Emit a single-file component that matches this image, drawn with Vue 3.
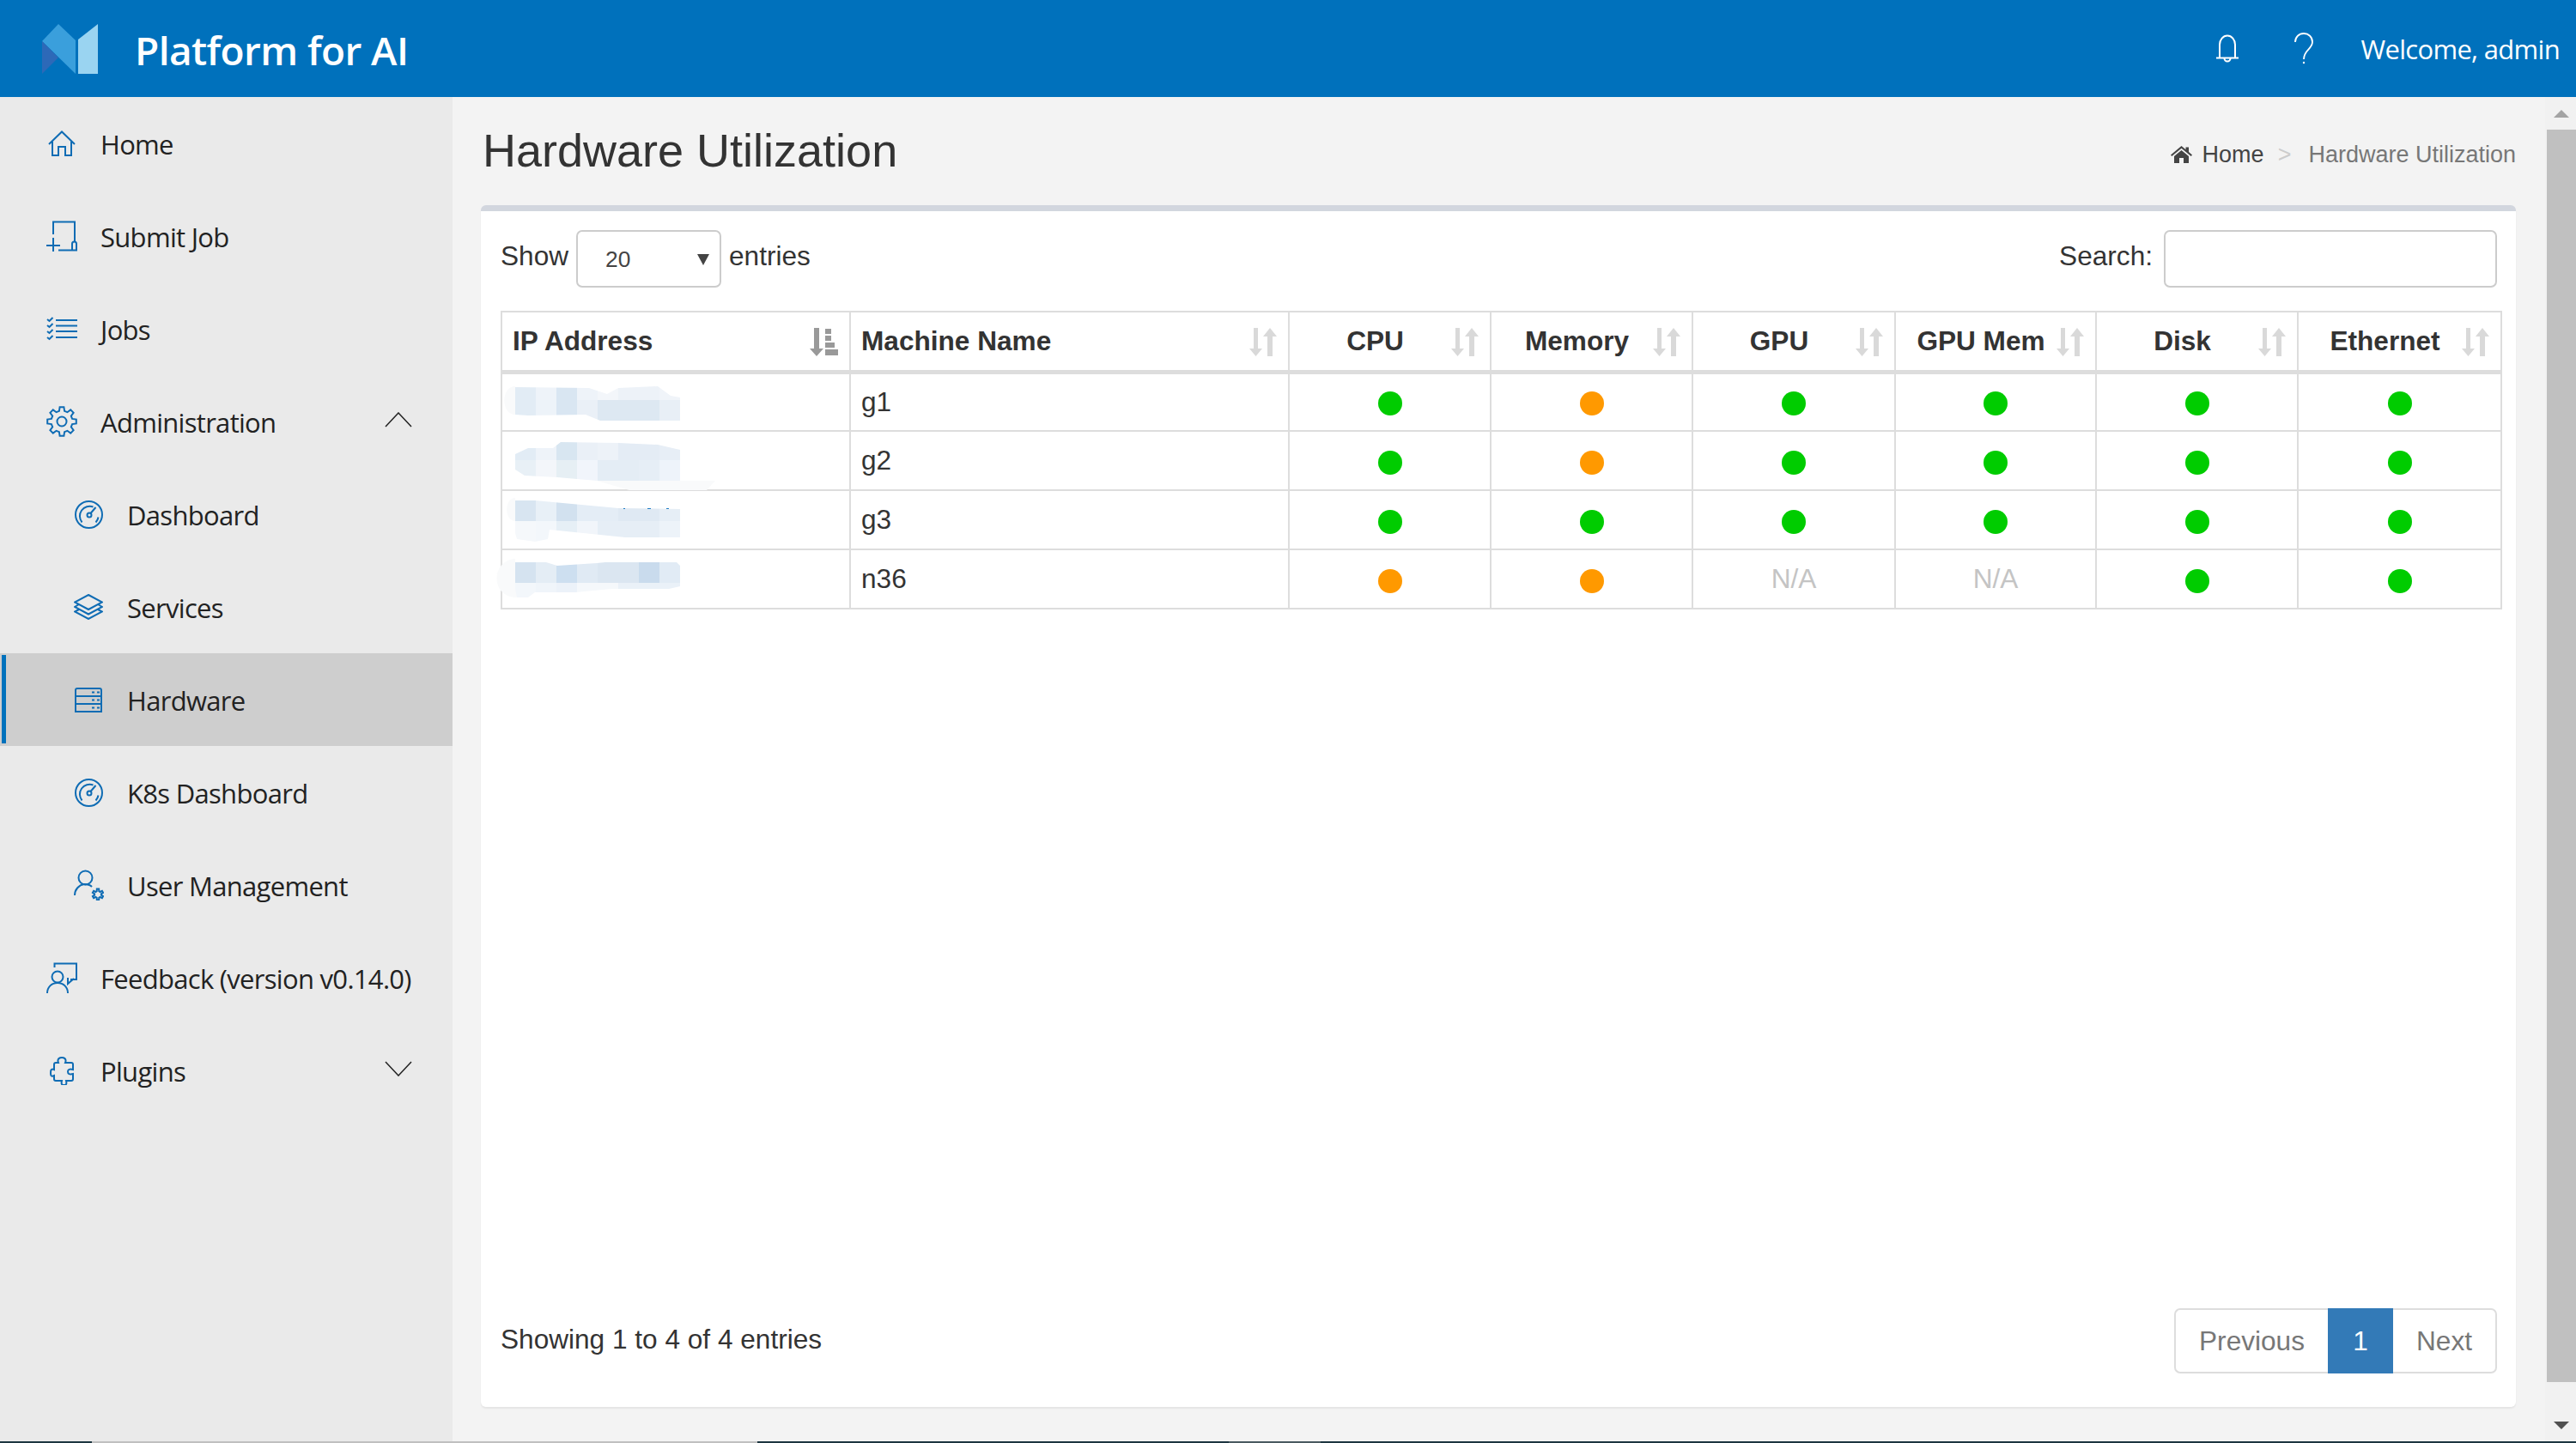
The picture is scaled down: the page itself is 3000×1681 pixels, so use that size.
<template>
  <div class="page">
    <header class="topbar">
      <svg class="logo" width="65" height="58" viewBox="0 0 65 58">
        <polygon points="0,20 19,0 39,19 39,58" fill="#3a9fdc" />
        <polygon points="0,20 19,39 0,58" fill="#2d69b8" />
        <polygon points="42,18 65,0 65,58 42,58" fill="#9ad4f1" />
      </svg>
      <span class="brand">Platform for AI</span>
      <div class="topbar-right">
        <svg class="bell" width="28" height="33" viewBox="0 0 28 33" fill="none" stroke="#fff" stroke-width="2">
          <path d="M5 27V12a9 10.500 0 0 1 18 0v15" />
          <path d="M1 27.500h26" />
          <path d="M10.500 28a3.500 3.500 0 0 0 7 0" />
        </svg>
        <svg class="help" width="22" height="37" viewBox="0 0 22 37" fill="none" stroke="#fff" stroke-width="1.800">
          <path d="M1 11C1 5 5.500 1 11 1s10 4 10 10c0 8-10 9-10 20" />
          <circle cx="11" cy="35" r="1.200" fill="#fff" stroke="none" />
        </svg>
        <span class="welcome">Welcome, admin</span>
      </div>
    </header>

    <div class="body">
      <nav class="sidebar">
        <a
          v-for="item in navItems"
          :key="item.label"
          :class="['nav-item', { 'nav-sub': item.sub, active: item.active }]"
        >
          <span class="nav-icon">
            <svg
              :width="item.w"
              :height="item.h"
              :viewBox="`0 0 ${item.w} ${item.h}`"
              fill="none"
              stroke="#0f6cb4"
              stroke-width="2"
            >
              <path v-for="d in item.paths" :key="d" :d="d" />
            </svg>
          </span>
          <span class="nav-label">{{ item.label }}</span>
          <svg
            v-if="item.chevron"
            class="chevron"
            width="32"
            height="18"
            viewBox="0 0 32 18"
            fill="none"
            stroke="#222"
            stroke-width="1.500"
          >
            <path :d="item.chevron === 'up' ? 'M1 17L16 1l15 16' : 'M1 1l15 16L31 1'" />
          </svg>
        </a>
      </nav>

      <main class="content">
        <div class="title-row">
          <h1>Hardware Utilization</h1>
          <div class="breadcrumb">
            <svg width="25" height="20" viewBox="0 0 25 20" fill="#444">
              <path d="M12.500 0L0 10.500l1.300 1.500L12.500 2.800 23.700 12l1.300-1.500-4-3.400V1.500h-3.500v2.700z" />
              <path d="M12.500 5L4 12v8h6v-6h5v6h6v-8z" />
            </svg>
            <span class="crumb-home">Home</span>
            <span class="crumb-sep">&gt;</span>
            <span class="crumb-current">Hardware Utilization</span>
          </div>
        </div>

        <section class="card">
          <div class="controls">
            <label class="length">
              Show
              <span class="select"><span>20</span><i class="caret"></i></span>
              entries
            </label>
            <label class="search">
              Search:
              <span class="search-input"></span>
            </label>
          </div>

          <table class="grid">
            <colgroup>
              <col v-for="(w, i) in colWidths" :key="i" :style="{ width: w + 'px' }" />
            </colgroup>
            <thead>
              <tr>
                <th v-for="(col, i) in columns" :key="col" :class="{ 'th-left': i < 2 }">
                  {{ col }}
                  <svg v-if="i === 0" class="sort" width="33" height="33" viewBox="0 0 33 33" fill="#999">
                    <path d="M5 0h6v24h5L8 33 0 24h5z" />
                    <path d="M18 1h7v6h-7zM18 9h7v6h-7zM18 17h11v6H18zM18 25h15v7H18z" />
                  </svg>
                  <svg v-else class="sort" width="32" height="33" viewBox="0 0 32 33" fill="#d9d9d9">
                    <path d="M5 0h5v24h5L7.500 33 0 24h5z" />
                    <path d="M21 33h6V10h5L24 0l-8 10h5z" />
                  </svg>
                </th>
              </tr>
            </thead>
            <tbody>
              <tr v-for="(row, r) in rows" :key="row.name">
                <td class="ip-cell">
                  <svg class="mosaic" width="300" height="67" viewBox="0 0 300 67">
                    <path v-for="s in row.smears" :key="s" :d="s" fill="#f9fafb" />
                    <clipPath :id="`ip-${r}`">
                      <path :d="row.shape" />
                    </clipPath>
                    <g :clip-path="`url(#ip-${r})`">
                      <rect
                        v-for="(c, i) in row.top"
                        :key="'t' + i"
                        :x="17 + 24 * i"
                        y="0"
                        width="24"
                        :height="row.split"
                        :fill="c"
                      />
                      <rect
                        v-for="(c, i) in row.bottom"
                        :key="'b' + i"
                        :x="17 + 24 * i"
                        :y="row.split"
                        width="24"
                        :height="67 - row.split"
                        :fill="c"
                      />
                    </g>
                    <path v-if="row.specks" :d="row.specks" fill="#1f7cc4" />
                  </svg>
                </td>
                <td>{{ row.name }}</td>
                <td v-for="(s, i) in row.status" :key="i" class="center">
                  <span v-if="s === 'na'" class="na">N/A</span>
                  <span v-else :class="['dot', s]"></span>
                </td>
              </tr>
            </tbody>
          </table>

          <div class="footer-row">
            <span class="info">Showing 1 to 4 of 4 entries</span>
            <div class="pager">
              <span class="page-btn prev">Previous</span>
              <span class="page-btn current">1</span>
              <span class="page-btn next">Next</span>
            </div>
          </div>
        </section>
      </main>

      <div class="scrollbar">
        <span class="arrow-up"></span>
        <span class="thumb"></span>
        <span class="arrow-down"></span>
      </div>
    </div>
    <div class="strip">
      <span class="seg seg-dark" style="width: 107px"></span>
      <span class="seg seg-light" style="width: 775px"></span>
      <span class="seg seg-dark" style="width: 549px"></span>
      <span class="seg seg-mid" style="width: 107px"></span>
      <span class="seg seg-dark seg-rest"></span>
    </div>
  </div>
</template>

<script setup>
function gear(cx, cy, outer, inner, teeth) {
  const step = (Math.PI * 2) / teeth
  let d = ''
  for (let i = 0; i < teeth; i++) {
    const a = i * step - Math.PI / 2
    const pts = [
      [inner, a - step * 0.32],
      [outer, a - step * 0.18],
      [outer, a + step * 0.18],
      [inner, a + step * 0.32]
    ]
    for (const [r, t] of pts) {
      d += `${d ? 'L' : 'M'}${(cx + r * Math.cos(t)).toFixed(1)} ${(cy + r * Math.sin(t)).toFixed(1)}`
    }
  }
  return d + 'Z'
}

const gauge = [
  'M32 16.500a15.500 15.500 0 1 1-31 0 15.500 15.500 0 0 1 31 0z',
  'M8.500 25.500a11.500 11.500 0 0 1 13-18',
  'M24.500 25.500a11.500 11.500 0 0 0 3-6',
  'M19.500 17a2.500 2.500 0 1 1-5 0 2.500 2.500 0 0 1 5 0z',
  'M18.500 15l6-7'
]

const navItems = [
  {
    label: 'Home',
    w: 32,
    h: 30,
    paths: ['M1 16L16 1.500 31 16', 'M5 13v16h7V19h8v10h7V13']
  },
  {
    label: 'Submit Job',
    w: 36,
    h: 36,
    paths: ['M8 16V1.500h25V24', 'M14 34.500h21V27a2.500 2.500 0 0 0-5 0v7', 'M0 29h16', 'M8 20v16']
  },
  {
    label: 'Jobs',
    w: 36,
    h: 28,
    paths: [
      'M11 4h25', 'M11 10.500h25', 'M11 17h25', 'M11 24h25',
      'M1 3l2.500 2L7.500 1', 'M1 10l2.500 2 4-4', 'M1 17l2.500 2 4-4', 'M1 24l2.500 2 4-4'
    ]
  },
  {
    label: 'Administration',
    chevron: 'up',
    w: 36,
    h: 36,
    paths: [gear(18, 18, 17, 12.5, 8), 'M23.500 18a5.500 5.500 0 1 1-11 0 5.500 5.500 0 0 1 11 0z']
  },
  { label: 'Dashboard', sub: true, w: 33, h: 33, paths: gauge },
  {
    label: 'Services',
    sub: true,
    w: 34,
    h: 30,
    paths: [
      'M17 1l16 8.500L17 18 1 9.500z',
      'M6 12l-5 3 16 8.500L33 15l-5-3',
      'M6 18l-5 2.500L17 29l16-8.500-5-2.500'
    ]
  },
  {
    label: 'Hardware',
    sub: true,
    active: true,
    w: 32,
    h: 29,
    paths: [
      'M1 3a2 2 0 0 1 2-2h26a2 2 0 0 1 2 2v25H1z',
      'M1 10h30', 'M1 19h30',
      'M20 5.500h3', 'M26 5.500h3', 'M20 14.500h3', 'M26 14.500h3', 'M20 23.500h3', 'M26 23.500h3'
    ]
  },
  { label: 'K8s Dashboard', sub: true, w: 33, h: 33, paths: gauge },
  {
    label: 'User Management',
    sub: true,
    w: 35,
    h: 36,
    paths: [
      'M21.500 9.500a8 8 0 1 1-16 0 8 8 0 0 1 16 0z',
      'M1 30c0-7 5-12 11-13 4 0 7 1 9 3',
      gear(28, 29, 6.5, 4, 6)
    ]
  },
  {
    label: 'Feedback (version v0.14.0)',
    w: 36,
    h: 36,
    paths: [
      'M9.500 6V1.500H35V20h-7',
      'M32 19l-7 6v-7',
      'M19.500 17a6.500 6.500 0 1 1-13 0 6.500 6.500 0 0 1 13 0z',
      'M1 36c0-7 5-12 12-12s12 5 12 12'
    ]
  },
  {
    label: 'Plugins',
    chevron: 'down',
    w: 28,
    h: 33,
    paths: [
      'M10 7c-2-5 2-6 4-6s6 1 4 6h7a2 2 0 0 1 2 2v6c-4-1-6 0-6 2.500S23 21 27 20v6a2 2 0 0 1-2 2h-6c1 4 0 5-2.500 5S13 32 14 28H7a2 2 0 0 1-2-2v-4c-4 2-4-1-4-3s0-6 4-4V9a2 2 0 0 1 2-2z'
    ]
  }
]

const columns = ['IP Address', 'Machine Name', 'CPU', 'Memory', 'GPU', 'GPU Mem', 'Disk', 'Ethernet']
const colWidths = [406, 511, 235, 235, 236, 234, 235, 237]

// the first column is a pixelated, smudged-out address
const rows = [
  {
    name: 'g1',
    status: ['ok', 'warn', 'ok', 'ok', 'ok', 'ok'],
    shape: 'M17 15L103 16 124 23 137 16 183 14 198 25 209 27V54H116L99 47 32 48 17 47Z',
    split: 30,
    top: ['#e2ecf5', '#eef3f9', '#d9e6f2', '#eef3f9', '#f3f6fa', '#edf2f8', '#edf2f8', '#f0f4f9'],
    bottom: ['#e2ecf5', '#edf3f9', '#d9e6f2', '#eaf0f7', '#dde8f2', '#dde8f2', '#dde8f2', '#e8eff6'],
    smears: ['M17 14C0 14 0 47 17 47Z']
  },
  {
    name: 'g2',
    status: ['ok', 'warn', 'ok', 'ok', 'ok', 'ok'],
    shape: 'M17 26L32 19 61 19 70 12 137 13 183 15 209 21V57H112L66 53 28 51 17 44Z',
    split: 33,
    top: ['#e2ecf5', '#eef3f9', '#d8e6f1', '#eaf0f7', '#edf2f8', '#e4ecf5', '#e4ecf5', '#e7eef6'],
    bottom: ['#e8f0f6', '#f3f6fa', '#e6eff4', '#f1f5fb', '#e4edf5', '#e4edf5', '#e6eef6', '#eef3fa'],
    smears: ['M112 57H250L240 68H150Z']
  },
  {
    name: 'g3',
    status: ['ok', 'ok', 'ok', 'ok', 'ok', 'ok'],
    shape: 'M17 11L40 11 137 20 209 21V54H145L57 45 55 56 40 59 19 56 17 49Z',
    split: 35,
    top: ['#d8e5f1', '#e8f0f7', '#d2e1ef', '#e4edf6', '#e4edf6', '#dfe9f3', '#dfe9f3', '#e6eef6'],
    bottom: ['#f5f8fb', '#f3f7fb', '#e6eff6', '#f1f5fa', '#e6eef6', '#e6eef6', '#e6eef6', '#edf3f9'],
    smears: ['M17 8C4 8 4 35 17 35Z'],
    specks: 'M143 20h2v1h-2zM171 20h4v1h-4zM193 20h3v1h-3z'
  },
  {
    name: 'n36',
    status: ['warn', 'warn', 'na', 'na', 'ok', 'ok'],
    shape: 'M17 14L53 14 66 18 112 15 122 14 205 14 209 18V42L196 45 129 45 87 49 40 49 32 55 19 55 17 45Z',
    split: 38,
    top: ['#d5e3f0', '#e4edf5', '#cddff0', '#e0eaf4', '#dbe6f1', '#dbe6f1', '#c9dbed', '#e1ebf5'],
    bottom: ['#f3f7fb', '#f0f5fa', '#ecf2f9', '#f5f8fb', '#f5f8fb', '#eaf1f8', '#eaf1f8', '#eaf1f8'],
    smears: ['M17 10C-12 12-12 55 19 55Z']
  }
]
</script>

<style>
html,
body {
  margin: 0;
  overflow: hidden;
}
</style>

<style scoped>
.page {
  width: 3000px;
  height: 1681px;
  display: flex;
  flex-direction: column;
  background: #f3f3f3;
  font-family: "Liberation Sans", Arial, sans-serif;
  font-size: 31.600px;
  color: #333;
  overflow: hidden;
}

.topbar {
  flex: 0 0 113px;
  display: flex;
  align-items: center;
  padding: 0 19px 0 49px;
  background: #0071bc;
  color: #fff;
  font-family: "Open Sans", sans-serif;
}

.logo {
  margin-right: 43px;
}

.brand {
  padding-top: 3px;
  font-size: 46px;
  font-weight: 600;
  letter-spacing: -0.6px;
}

.topbar-right {
  margin-left: auto;
  display: flex;
  align-items: center;
}

.bell {
  margin-right: 64px;
}

.help {
  margin-right: 56px;
}

.welcome {
  font-size: 31px;
  letter-spacing: -0.7px;
}

.body {
  flex: 1;
  min-height: 0;
  display: flex;
}

.sidebar {
  flex: 0 0 527px;
  background: #eaeaea;
  font-family: "Open Sans", sans-serif;
  font-size: 31px;
  letter-spacing: -0.7px;
  color: #222;
}

.nav-item {
  height: 108px;
  display: flex;
  align-items: center;
  padding: 0 47px 0 52px;
  gap: 25px;
  box-sizing: border-box;
}

.nav-sub {
  padding-left: 83px;
  gap: 25px;
}

.nav-label {
  padding-top: 2px;
  white-space: nowrap;
}

.nav-item.active {
  position: relative;
  background: #cecece;
}

.nav-item.active::before {
  content: "";
  position: absolute;
  left: 2px;
  top: 2px;
  bottom: 3px;
  width: 5px;
  background: #0071bc;
}

.nav-icon {
  flex: 0 0 40px;
  display: flex;
  justify-content: center;
}

.nav-icon svg {
  display: block;
}

.chevron {
  margin: 0 0 4px auto;
}

.content {
  flex: 1;
  min-width: 0;
  display: flex;
  flex-direction: column;
  padding: 0 34px 40px 33px;
}

.title-row {
  flex: 0 0 126px;
  display: flex;
  align-items: center;
  justify-content: space-between;
}

h1 {
  margin: 0 0 0 2px;
  font-size: 54px;
  font-weight: 400;
  line-height: 1.1;
  color: #333;
}

.breadcrumb {
  display: flex;
  align-items: center;
  padding-top: 8px;
  font-size: 27px;
}

.crumb-home {
  margin-left: 12px;
  color: #444;
}

.crumb-sep {
  margin: 0 20px 0 16px;
  color: #ccc;
}

.crumb-current {
  color: #777;
}

.card {
  flex: 1;
  display: flex;
  flex-direction: column;
  box-sizing: border-box;
  padding: 22px 18px 39px 23px;
  background: #fff;
  border-top: 7px solid #d2d6de;
  border-radius: 6px;
  box-shadow: 0 2px 2px rgba(0, 0, 0, 0.06);
}

.controls {
  display: flex;
  justify-content: space-between;
  align-items: flex-start;
  padding-right: 4px;
  margin-bottom: 27px;
}

.length,
.search {
  display: flex;
  align-items: flex-start;
  gap: 9px;
  line-height: 61px;
}

.search {
  gap: 13px;
}

.select {
  width: 169px;
  height: 67px;
  box-sizing: border-box;
  display: flex;
  align-items: center;
  justify-content: space-between;
  padding: 2px 12px 0 32px;
  border: 2px solid #ccc;
  border-radius: 7px;
  font-size: 26.400px;
  line-height: 1;
  color: #444;
}

.caret {
  width: 0;
  height: 0;
  border-left: 7px solid transparent;
  border-right: 7px solid transparent;
  border-top: 13px solid #444;
}

.search-input {
  width: 388px;
  height: 67px;
  box-sizing: border-box;
  border: 2px solid #ccc;
  border-radius: 7px;
}

.grid {
  width: 2329px;
  table-layout: fixed;
  border-collapse: collapse;
  border: 2px solid #ddd;
}

th,
td {
  border: 2px solid #ddd;
  box-sizing: border-box;
  padding: 0 12px;
  white-space: nowrap;
}

th {
  position: relative;
  height: 70px;
  padding: 0 50px 0 16px;
  text-align: center;
  font-weight: 700;
  border-bottom-width: 5px;
}

th.th-left {
  padding-left: 12px;
  text-align: left;
}

.sort {
  position: absolute;
  right: 13px;
  top: 18px;
}

td {
  height: 69px;
}

.ip-cell {
  position: relative;
  padding: 0;
}

.mosaic {
  position: absolute;
  left: -2px;
  top: 0;
  overflow: visible;
}

.center {
  text-align: center;
  padding: 0;
}

.dot {
  display: inline-block;
  width: 28px;
  height: 28px;
  border-radius: 50%;
  vertical-align: middle;
}

.dot.ok {
  background: #00cc00;
}

.dot.warn {
  background: #ff9900;
}

.na {
  color: #c4c4c4;
}

.footer-row {
  margin-top: auto;
  display: flex;
  align-items: center;
  justify-content: space-between;
  padding-right: 4px;
}

.info {
  padding-bottom: 4px;
}

.pager {
  display: flex;
  height: 76px;
  box-sizing: border-box;
}

.page-btn {
  display: flex;
  align-items: center;
  justify-content: center;
  box-sizing: border-box;
  color: #777;
  border: 2px solid #ddd;
}

.prev {
  width: 179px;
  border-right: 0;
  border-radius: 7px 0 0 7px;
}

.current {
  width: 76px;
  color: #fff;
  background: #337ab7;
  border-color: #337ab7;
}

.next {
  width: 121px;
  border-left: 0;
  border-radius: 0 7px 7px 0;
}

.scrollbar {
  flex: 0 0 36px;
  position: relative;
  background: #f1f1f1;
}

.thumb {
  position: absolute;
  top: 38px;
  left: 2px;
  right: 0;
  height: 1459px;
  background: #c0c0c0;
}

.arrow-up,
.arrow-down {
  position: absolute;
  left: 10px;
  width: 0;
  height: 0;
  border-left: 9px solid transparent;
  border-right: 9px solid transparent;
}

.arrow-up {
  top: 15px;
  border-bottom: 9px solid #a3a3a3;
}

.arrow-down {
  bottom: 14px;
  border-top: 9px solid #505050;
}

.strip {
  flex: 0 0 2px;
  display: flex;
}

.seg-dark {
  background: #1d3640;
}

.seg-light {
  background: #c0c0c0;
}

.seg-mid {
  background: #4a5a60;
}

.seg-rest {
  flex: 1;
}
</style>
